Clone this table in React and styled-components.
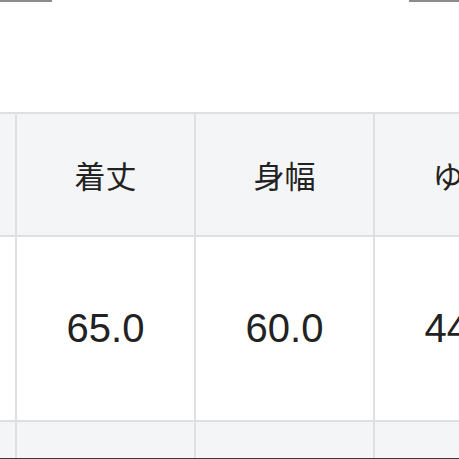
import React from 'react';
import styled, { createGlobalStyle } from 'styled-components';

const GlobalStyle = createGlobalStyle`
  html, body {
    margin: 0;
    padding: 0;
    background: #ffffff;
  }
  body {
    width: 459px;
    height: 459px;
    overflow: hidden;
    font-family: "Liberation Sans", "Noto Sans CJK JP", sans-serif;
  }
`;

const Page = styled.div`
  width: 459px;
  height: 459px;
  overflow: hidden;
  display: flex;
  flex-direction: column;
  background: #fff;
`;

const TopBar = styled.div`
  height: 112px;
  display: flex;
  justify-content: space-between;
  align-items: flex-start;
`;

const Edge = styled.div`
  width: ${(p) => p.w}px;
  height: 2px;
  background: #8c8c8c;
`;

const TableWrap = styled.div`
  flex: 1;
  overflow: hidden;
  margin-left: -162px;
`;

const Grid = styled.div`
  display: grid;
  grid-template-columns: repeat(4, 177px);
  grid-template-rows: 121px 183px 36px;
  gap: 2px;
  padding-top: 2px;
  background: #dfe0e3;
  width: max-content;
`;

const Cell = styled.div`
  display: flex;
  align-items: center;
  justify-content: center;
  background: ${(p) => (p.head ? '#f4f5f6' : '#ffffff')};
  color: #222222;
  font-family: ${(p) =>
    p.head
      ? '"Noto Sans CJK JP", sans-serif'
      : '"Liberation Sans", Arial, sans-serif'};
  font-size: ${(p) => (p.head ? '31px' : '40px')};
  white-space: nowrap;
`;

const BottomLine = styled.div`
  height: 1px;
  background: #3a3a3a;
`;

const headers = ['サイズ', '着丈', '身幅', 'ゆき'];
const values = ['L', '65.0', '60.0', '44.0'];

export default function App() {
  return (
    <Page>
      <GlobalStyle />
      <TopBar>
        <Edge w={52} />
        <Edge w={50} />
      </TopBar>
      <TableWrap>
        <Grid>
          {headers.map((h) => (
            <Cell head key={h}>{h}</Cell>
          ))}
          {values.map((v) => (
            <Cell key={v}>{v}</Cell>
          ))}
          {headers.map((h) => (
            <Cell head key={'r' + h} />
          ))}
        </Grid>
      </TableWrap>
      <BottomLine />
    </Page>
  );
}
